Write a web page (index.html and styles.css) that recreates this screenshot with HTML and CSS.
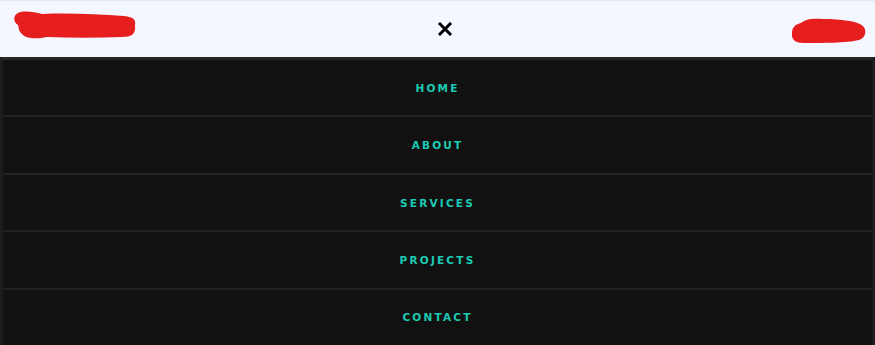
FILE: index.html
```html
<!DOCTYPE html>
<html lang="en">
<head>
<meta charset="utf-8">
<title>Menu</title>
<link rel="stylesheet" href="styles.css">
</head>
<body>
<header class="topbar">
  <div class="logo">
    <svg width="126" height="30" viewBox="0 0 126 30">
      <path d="M6 3 C12 0 22 2 30 4 C55 3 85 4 112 6 C122 7 124 10 123 15 C124 24 120 27 110 27 C85 28 60 28 35 27 C25 29 14 29 10 24 C6 21 7 17 6 15 C1 12 1 5 6 3 Z" fill="#e61e1e"/>
    </svg>
  </div>
  <button class="close" aria-label="Close menu">
    <svg width="14" height="14" viewBox="0 0 14 14">
      <path d="M2 2 L12 12 M12 2 L2 12" stroke="#000" stroke-width="3" stroke-linecap="square"/>
    </svg>
  </button>
  <div class="badge">
    <svg width="76" height="27" viewBox="0 0 76 27">
      <path d="M10 5 C14 1 22 0 32 1 C50 1 66 3 72 8 C76 12 75 20 68 22 C56 25 30 25 12 25 C4 25 0 21 1 15 C1 9 5 6 10 5 Z" fill="#e61e1e"/>
    </svg>
  </div>
</header>
<nav class="menu">
  <a class="item" href="#">HOME</a>
  <a class="item" href="#">ABOUT</a>
  <a class="item" href="#">SERVICES</a>
  <a class="item" href="#">PROJECTS</a>
  <a class="item" href="#">CONTACT</a>
</nav>
</body>
</html>
```

FILE: styles.css
```css
html, body {
  margin: 0;
  padding: 0;
  background: #111111;
}
body {
  font-family: "DejaVu Sans", Verdana, sans-serif;
}
.topbar {
  height: 57px;
  box-sizing: border-box;
  border-top: 1px solid #e6e8ef;
  background: #f4f7ff;
  display: flex;
  align-items: center;
  justify-content: space-between;
  padding: 0 8px 0 12px;
  position: relative;
}
.logo {
  display: flex;
  margin-top: -8px;
}
.badge {
  display: flex;
  margin-top: 4px;
}
.close {
  position: absolute;
  left: 438px;
  top: 21px;
  border: 0;
  background: none;
  padding: 0;
  width: 14px;
  height: 14px;
  display: flex;
  cursor: pointer;
}
.menu {
  display: flex;
  flex-direction: column;
  background: #111111;
  border: 3px solid #1d1d1d;
  border-top: 3px solid #262626;
  border-bottom: 0;
  height: 288px;
  box-sizing: border-box;
}
.item {
  flex: 1;
  display: flex;
  align-items: center;
  justify-content: center;
  color: #1ccbb5;
  text-decoration: none;
  font-size: 10.5px;
  font-weight: bold;
  letter-spacing: 2.2px;
  border-bottom: 2px solid #222222;
}
.item:last-child {
  border-bottom: 0;
}
```
